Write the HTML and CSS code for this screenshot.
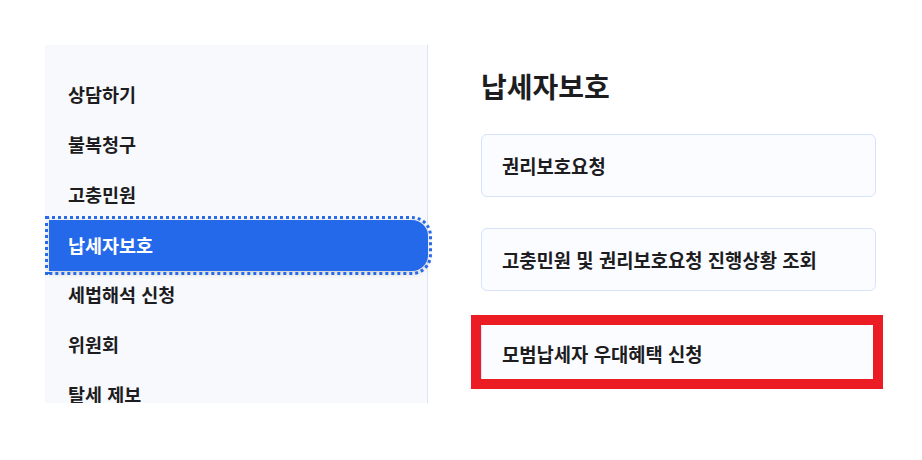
FILE: index.html
```html
<!DOCTYPE html>
<html lang="ko">
<head>
<meta charset="utf-8">
<title>납세자보호</title>
<link rel="stylesheet" href="styles.css">
</head>
<body>
<div class="page">
  <nav class="sidebar">
    <ul class="menu">
      <li class="menu-item">상담하기</li>
      <li class="menu-item">불복청구</li>
      <li class="menu-item">고충민원</li>
      <li class="menu-item active">납세자보호</li>
      <li class="menu-item">세법해석 신청</li>
      <li class="menu-item">위원회</li>
      <li class="menu-item">탈세 제보</li>
    </ul>
  </nav>
  <main class="content">
    <h1 class="title">납세자보호</h1>
    <div class="cards">
      <div class="card">권리보호요청</div>
      <div class="card">고충민원 및 권리보호요청 진행상황 조회</div>
      <div class="card highlighted">모범납세자 우대혜택 신청<span class="mark"></span></div>
    </div>
  </main>
</div>
</body>
</html>
```
FILE: styles.css
```css
html, body {
  margin: 0;
  padding: 0;
  background: #ffffff;
}
body {
  font-family: "Noto Sans CJK KR", "Noto Sans", sans-serif;
  color: #1d1d1f;
}
.page {
  display: flex;
  align-items: flex-start;
  padding: 45px 46px 0 45px;
  gap: 53px;
}
.sidebar {
  flex: 0 0 383px;
  height: 358px;
  overflow-x: visible;
  overflow-y: clip;
  background: #f8f9fd;
  border-right: 1px solid #dbe5f6;
  box-sizing: border-box;
  padding: 24px 0 0 4px;
}
.menu {
  list-style: none;
  margin: 0 -1px 0 0;
  padding: 0;
}
.menu-item {
  height: 50px;
  line-height: 50px;
  padding-left: 19px;
  font-size: 18.5px;
  font-weight: 700;
  color: #1d1d1f;
}
.menu-item.active {
  background: #2469ea;
  color: #ffffff;
  border-radius: 0 16px 16px 0;
  outline: 3px dotted #2a6ae8;
  outline-offset: 1px;
  box-shadow: 0 2px 6px rgba(0, 0, 0, 0.18);
  height: 51px;
  line-height: 51px;
  margin-top: 1px;
  margin-bottom: -2px;
}
.content {
  flex: 1;
  padding-top: 24px;
}
.title {
  margin: 0 0 31px 0;
  font-size: 28px;
  line-height: 34px;
  font-weight: 700;
  color: #1d1d1f;
}
.cards {
  display: flex;
  flex-direction: column;
  gap: 31px;
}
.card {
  position: relative;
  height: 63px;
  box-sizing: border-box;
  display: flex;
  align-items: center;
  padding-left: 20px;
  background: #fbfcff;
  border: 1px solid #d6e3fa;
  border-radius: 6px;
  font-size: 18.8px;
  font-weight: 700;
  color: #1d1d1f;
}
.mark {
  position: absolute;
  left: -11px;
  top: -8px;
  right: -8px;
  bottom: -5px;
  border: 10px solid #ec1c24;
  pointer-events: none;
}
```
